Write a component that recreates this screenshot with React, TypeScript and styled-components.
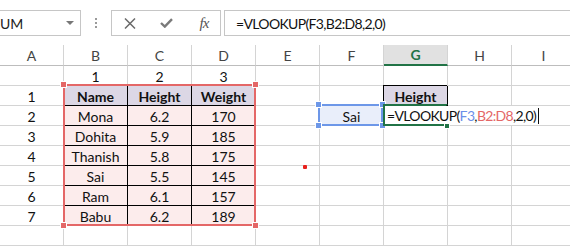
import React from "react";
import styled, { createGlobalStyle } from "styled-components";

const GlobalStyle = createGlobalStyle`
  html, body {
    margin: 0;
    padding: 0;
    background: #fff;
  }
  body {
    font-family: Lato, "Liberation Sans", sans-serif;
  }
`;

const GRID = "#d4d4d4";
const GREEN = "#217346";
const RED = "#e46767";
const BLUE = "#6d97e8";

const Page = styled.div`
  width: 570px;
  height: 246px;
  overflow: hidden;
  background: #fff;
`;

/* ---------- formula bar ---------- */

const Toolbar = styled.div`
  display: flex;
  align-items: flex-start;
  height: 45px;
  padding-top: 10px;
  box-sizing: border-box;
`;

const NameBox = styled.div`
  box-sizing: border-box;
  width: 81px;
  height: 26px;
  border: 1px solid #c6c6c6;
  border-left: none;
  display: flex;
  align-items: center;
  justify-content: space-between;
  padding-right: 6px;
  font-size: 14px;
  color: #222;
`;

const Caret = styled.span`
  width: 0;
  height: 0;
  border-left: 4px solid transparent;
  border-right: 4px solid transparent;
  border-top: 4px solid #777;
`;

const Grip = styled.div`
  width: 30px;
  height: 26px;
  display: flex;
  flex-direction: column;
  align-items: center;
  justify-content: center;
  gap: 2px;

  span {
    width: 2px;
    height: 2px;
    background: #9a9a9a;
  }
`;

const ButtonBox = styled.div`
  box-sizing: border-box;
  width: 110px;
  height: 26px;
  border: 1px solid #c6c6c6;
  display: flex;
  align-items: center;
`;

const BarButton = styled.div`
  width: 36px;
  height: 24px;
  display: flex;
  align-items: center;
  justify-content: center;
  color: #666;
`;

const Fx = styled.span`
  font-family: "Liberation Serif", serif;
  font-style: italic;
  font-size: 15px;
  color: #555;
  letter-spacing: -1px;
  padding-left: 4px;
`;

const FormulaInput = styled.div`
  box-sizing: border-box;
  flex: 1;
  height: 26px;
  margin-left: 3px;
  margin-right: -10px;
  border: 1px solid #c6c6c6;
  display: flex;
  align-items: center;
  padding-left: 11px;
  font-size: 14px;
  letter-spacing: -0.65px;
  color: #111;
`;

/* ---------- sheet ---------- */

const Sheet = styled.div`
  position: relative;
  display: grid;
  grid-template-columns: repeat(9, 64px);
  grid-template-rows: 21px;
  grid-auto-rows: 20px;
`;

const ColHead = styled.div<{ $active?: boolean }>`
  box-sizing: border-box;
  display: flex;
  align-items: center;
  justify-content: center;
  font-size: 14px;
  border-right: 1px solid ${GRID};
  border-bottom: ${(p) => (p.$active ? `2px solid ${GREEN}` : "1px solid #bdbdbd")};
  background: ${(p) => (p.$active ? "#e1e1e1" : "#fff")};
  color: ${(p) => (p.$active ? GREEN : "#444")};
  font-weight: ${(p) => (p.$active ? 700 : 400)};
`;

type Kind = "plain" | "head" | "data" | "lookup" | "ref" | "edit";

const fills: Record<Kind, string> = {
  plain: "#fff",
  head: "#dcd7e5",
  data: "#fcecec",
  lookup: "#dcd7e5",
  ref: "#e9eefa",
  edit: "#fff",
};

const boxed = (k: Kind) => k === "head" || k === "data" || k === "lookup";

const Cell = styled.div<{ $kind: Kind }>`
  box-sizing: border-box;
  display: flex;
  align-items: center;
  justify-content: ${(p) => (p.$kind === "edit" ? "flex-start" : "center")};
  padding-top: 1px;
  font-size: 14px;
  color: #111;
  white-space: nowrap;
  background: ${(p) => fills[p.$kind]};
  font-weight: ${(p) => (p.$kind === "head" || p.$kind === "lookup" ? 700 : 400)};
  border-right: 1px solid ${(p) => (boxed(p.$kind) ? "#000" : GRID)};
  border-bottom: 1px solid ${(p) => (boxed(p.$kind) ? "#000" : GRID)};
  box-shadow: ${(p) => (p.$kind === "lookup" ? "-1px -1px 0 #000" : "none")};
`;

const Editor = styled.span`
  position: relative;
  z-index: 1;
  height: 19px;
  margin-top: -1px;
  padding-left: 3px;
  padding-right: 40px;
  display: flex;
  align-items: center;
  letter-spacing: -0.65px;
  background: #fff;
`;

const RefText = styled.span<{ $color: string }>`
  color: ${(p) => p.$color};
`;

const TextCursor = styled.span`
  display: inline-block;
  width: 1px;
  height: 16px;
  margin-left: 2px;
  background: #111;
`;

/* ---------- overlays on the grid ---------- */

const Range = styled.div<{
  $color: string;
  $top: number;
  $left: number;
  $w: number;
  $h: number;
  $open?: boolean;
}>`
  position: absolute;
  z-index: 2;
  box-sizing: border-box;
  top: ${(p) => p.$top}px;
  left: ${(p) => p.$left}px;
  width: ${(p) => p.$w}px;
  height: ${(p) => p.$h}px;
  border: 2px solid ${(p) => p.$color};
  border-right-color: ${(p) => (p.$open ? "transparent" : p.$color)};
  pointer-events: none;
`;

const Handle = styled.i<{ $color: string; $v: "top" | "bottom"; $h: "left" | "right" }>`
  position: absolute;
  width: 5px;
  height: 5px;
  ${(p) => p.$v}: -4px;
  ${(p) => p.$h}: -4px;
  background: ${(p) => p.$color};
  box-shadow: 0 0 0 1px #fff;
`;

const FillHandle = styled.i`
  position: absolute;
  right: -3px;
  bottom: -4px;
  width: 4px;
  height: 4px;
  background: ${GREEN};
  box-shadow: 0 0 0 1px #fff;
`;

const Dot = styled.span`
  position: absolute;
  z-index: 2;
  top: 120px;
  left: 303px;
  width: 4px;
  height: 4px;
  border-radius: 1px;
  background: #e8211d;
`;

const corners: Array<["top" | "bottom", "left" | "right"]> = [
  ["top", "left"],
  ["top", "right"],
  ["bottom", "left"],
  ["bottom", "right"],
];

const people: Array<[string, string, string]> = [
  ["Mona", "6.2", "170"],
  ["Dohita", "5.9", "185"],
  ["Thanish", "5.8", "175"],
  ["Sai", "5.5", "145"],
  ["Ram", "6.1", "157"],
  ["Babu", "6.2", "189"],
];

type CellDef = { text?: React.ReactNode; kind?: Kind };

const formula = (
  <Editor>
    =VLOOKUP(<RefText $color="#6b8fe9">F3</RefText>,<RefText $color={RED}>B2:D8</RefText>,2,0)
    <TextCursor />
  </Editor>
);

function buildRows(): CellDef[][] {
  const rows: CellDef[][] = [];
  rows.push([{}, { text: "1" }, { text: "2" }, { text: "3" }]);
  rows.push([
    { text: "1" },
    { text: "Name", kind: "head" },
    { text: "Height", kind: "head" },
    { text: "Weight", kind: "head" },
    {},
    {},
    { text: "Height", kind: "lookup" },
  ]);
  people.forEach(([name, h, w], i) => {
    const row: CellDef[] = [
      { text: String(i + 2) },
      { text: name, kind: "data" },
      { text: h, kind: "data" },
      { text: w, kind: "data" },
    ];
    if (i === 0) {
      row.push({}, { text: "Sai", kind: "ref" }, { text: formula, kind: "edit" });
    }
    rows.push(row);
  });
  rows.push([], []);
  return rows;
}

const columns = ["A", "B", "C", "D", "E", "F", "G", "H", "I"];

export default function App() {
  const rows = buildRows();
  return (
    <Page>
      <GlobalStyle />
      <Toolbar>
        <NameBox>
          <span>UM</span>
          <Caret />
        </NameBox>
        <Grip>
          <span />
          <span />
          <span />
        </Grip>
        <ButtonBox>
          <BarButton>
            <svg width="12" height="11" viewBox="0 0 12 11">
              <path d="M1 0.5 L11 10.5 M11 0.5 L1 10.5" stroke="#6a6a6a" strokeWidth="1.5" fill="none" />
            </svg>
          </BarButton>
          <BarButton>
            <svg width="13" height="10" viewBox="0 0 13 10">
              <path d="M1 5 L4.8 8.6 L12 1.2" stroke="#7a7a7a" strokeWidth="2.4" fill="none" />
            </svg>
          </BarButton>
          <BarButton>
            <Fx>fx</Fx>
          </BarButton>
        </ButtonBox>
        <FormulaInput>=VLOOKUP(F3,B2:D8,2,0)</FormulaInput>
      </Toolbar>

      <Sheet>
        {columns.map((c) => (
          <ColHead key={c} $active={c === "G"}>
            {c}
          </ColHead>
        ))}
        {rows.map((row, r) =>
          columns.map((c, ci) => {
            const def = row[ci] ?? {};
            return (
              <Cell key={`${c}${r}`} $kind={def.kind ?? "plain"}>
                {def.text}
              </Cell>
            );
          })
        )}

        <Range $color={RED} $top={39} $left={63} $w={193} $h={142}>
          {corners.map(([v, h]) => (
            <Handle key={v + h} $color={RED} $v={v} $h={h} />
          ))}
        </Range>
        <Range $color={BLUE} $top={59} $left={318} $w={65} $h={22}>
          {corners.map(([v, h]) => (
            <Handle key={v + h} $color={BLUE} $v={v} $h={h} />
          ))}
        </Range>
        <Range $color={GREEN} $top={59} $left={383} $w={65} $h={22} $open>
          <FillHandle />
        </Range>
        <Dot />
      </Sheet>
    </Page>
  );
}
